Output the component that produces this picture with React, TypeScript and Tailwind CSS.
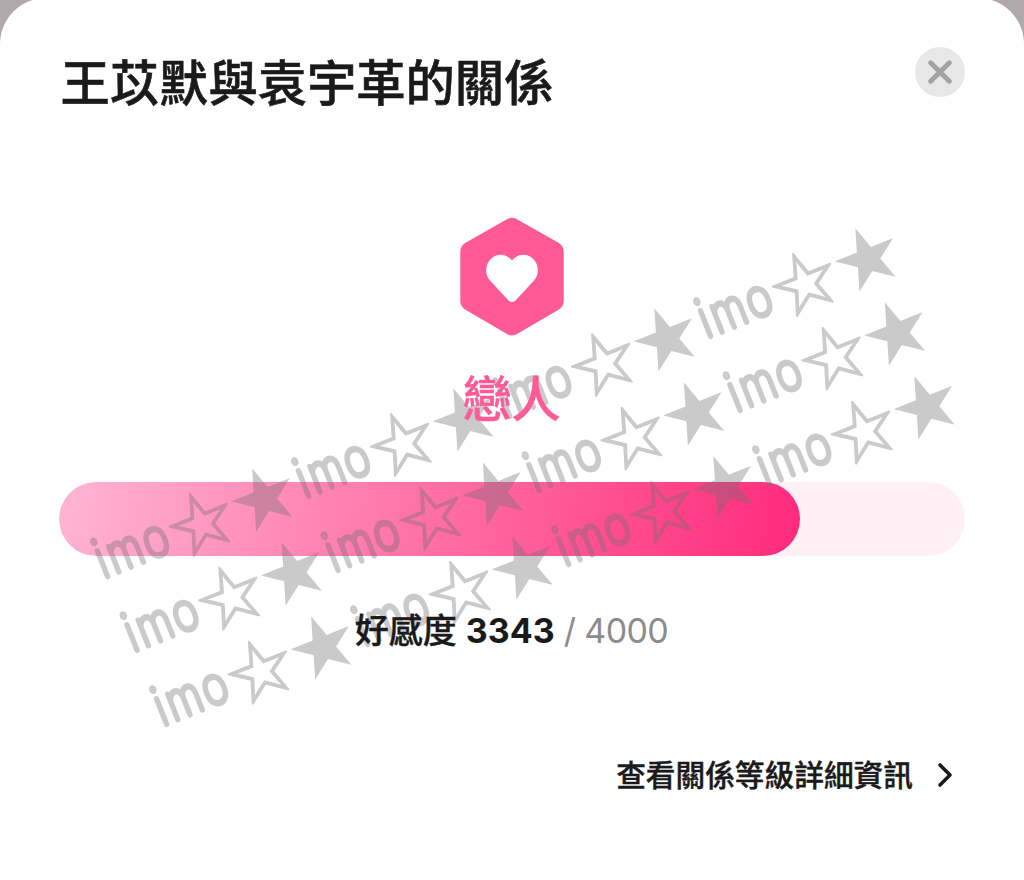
import React from 'react';

const current = 3343;
const total = 4000;

// every row starts one line below the previous one, along the tilted baseline
const rows = [
    { x: 107.3, y: 576 },
    { x: 136.8, y: 649.9 },
    { x: 166.3, y: 723.8 },
];
const units = [0, 1, 2, 3];

const Watermark: React.FC = () => (
    <svg
        className="absolute inset-0 pointer-events-none"
        width="1024"
        height="880"
        viewBox="0 0 1024 880"
        opacity="0.363"
        fill="#707070"
        stroke="#707070"
    >
        {rows.map((row) => (
            <g key={row.x} transform={`translate(${row.x} ${row.y}) rotate(-21.7)`}>
                {units.map((n) => (
                    <g key={n} transform={`translate(${n * 216.4} 0)`}>
                        <text
                            x="0 31.8 72.5"
                            y="0.2"
                            transform="scale(0.8 1)"
                            textAnchor="middle"
                            className="font-['Lato','Noto_Sans',sans-serif]"
                            fontSize="55"
                            fontWeight="100"
                            strokeWidth="6"
                            strokeLinejoin="round"
                            strokeLinecap="round"
                        >
                            imo
                        </text>
                        <text x="73.6" y="9.3" className="font-['Noto_Sans_CJK_TC',sans-serif]" fontSize="67.2" strokeWidth="0">
                            <tspan strokeWidth="1.3">☆</tspan>★
                        </text>
                    </g>
                ))}
            </g>
        ))}
    </svg>
);

const App: React.FC = () => {
    return (
        <div className="relative h-[880px] w-[1024px] overflow-hidden bg-[#b1a8ab] font-['Inter','Noto_Sans_CJK_TC',sans-serif] text-[#1a1a1a]">
            <div className="-mt-[2px] flex h-[882px] flex-col rounded-t-[46px] bg-white px-[59px] pt-[2px]">
                <header className="flex h-[164px] items-start justify-between">
                    <h1 className="ml-[1.5px] mt-[47px] text-[49.3px] font-medium leading-[72px] [-webkit-text-stroke:0.6px_#1a1a1a]">
                        王苡默與袁宇革的關係
                    </h1>
                    <button
                        type="button"
                        className="mt-[47px] flex size-[50px] items-center justify-center rounded-full bg-[#e7e7e7]"
                    >
                        <svg width="24" height="24" viewBox="0 0 24 24" stroke="#a2a2a2" strokeWidth="4.8" strokeLinecap="round">
                            <path d="M2.7 2.7 21.3 21.3M21.3 2.7 2.7 21.3" />
                        </svg>
                    </button>
                </header>

                <section className="flex flex-col items-center pt-[53px]">
                    <svg width="104" height="119" viewBox="0 0 104 119">
                        <path
                            fill="#ff5a96"
                            d="M47 2.2Q52-.7 57 2.2L98.500 25.800Q103.700 28.800 103.700 34.700V83.800Q103.700 89.700 98.500 92.700L57 117Q52 119.800 47 117L5.500 92.700Q.3 89.700 .3 83.800V34.700Q.3 28.800 5.500 25.800Z"
                        />
                        <path
                            fill="#fff"
                            d="M52 43.600C46.700 36.500 36.800 36.100 31 41.800C25 47.700 24.500 57.300 30 63.500L48.500 83.400Q52 86.800 55.500 83.400L74 63.500C79.500 57.300 79 47.700 73 41.800C67.200 36.100 57.300 36.500 52 43.600Z"
                        />
                    </svg>
                    <p className="relative z-10 mr-[1px] mt-[28px] text-[49px] font-medium leading-[72px] text-[#ff5a96] [-webkit-text-stroke:0.5px_#ff5a96]">
                        戀人
                    </p>
                    <div className="mt-[46px] h-[74px] w-full overflow-hidden rounded-full bg-[#fff0f5]">
                        <div className="h-full w-[741px] rounded-full bg-linear-[100deg,#ffb5d3,#ff5f9d_62%,#ff2a7b]" />
                    </div>
                    <p className="relative z-10 mr-[1px] mt-[50px] flex text-[34px] leading-[50px] whitespace-pre">
                        <span className="font-medium [-webkit-text-stroke:0.4px_#1a1a1a]">好感度 </span>
                        <span className="font-bold">{current}</span>
                        <span className="tracking-[-0.6px] text-[#8c8c8c]"> / {total}</span>
                    </p>
                </section>

                <a className="mt-[97px] flex items-center justify-end pr-[11px]">
                    <span className="text-[29.7px] font-medium leading-[44px] [-webkit-text-stroke:0.4px_#1a1a1a]">查看關係等級詳細資訊</span>
                    <svg className="ml-[23px]" width="18" height="26" viewBox="0 0 18 26" fill="none" stroke="#1a1a1a" strokeWidth="3.6" strokeLinecap="round" strokeLinejoin="round">
                        <path d="M4 3 14 13 4 23" />
                    </svg>
                </a>
            </div>
            <Watermark />
        </div>
    );
};

export default App;
